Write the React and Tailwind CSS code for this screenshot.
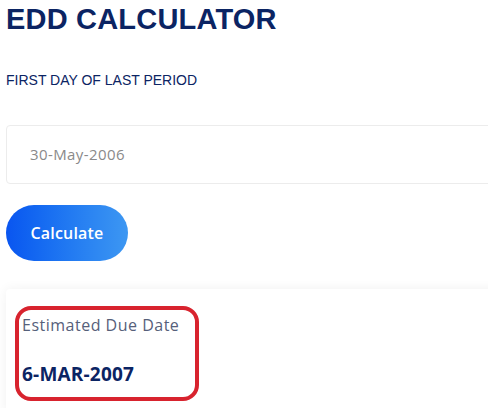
export default function App() {
  return (
    <div className="w-[488px] h-[408px] overflow-hidden bg-white pl-[6px] font-['Liberation_Sans',Arial,sans-serif]">
      <h1 className="pt-[3px] text-[29px] font-bold leading-[32px] text-[#0b2463] tracking-[0.2px]">
        EDD CALCULATOR
      </h1>
      <p className="mt-[37px] text-[14px] leading-[16px] text-[#0b2463]">
        FIRST DAY OF LAST PERIOD
      </p>

      <div className="mt-[37px] w-[500px] h-[59px] flex items-center pl-[23px] border border-[#ececec] rounded-[4px] bg-white">
        <span className="font-['Open_Sans',sans-serif] text-[15px] tracking-[0.4px] text-[#8a8a8a]">30-May-2006</span>
      </div>

      <button className="mt-[21px] w-[122px] h-[56px] rounded-full bg-gradient-to-r from-[#0a55f0] to-[#3d97f2] text-white font-['Open_Sans',sans-serif] font-semibold text-[16px] tracking-[0.2px]">
        Calculate
      </button>

      <div className="relative mt-[28px] w-[500px] h-[130px] bg-white rounded-[4px] shadow-[0_0_12px_rgba(0,0,0,0.06)] pt-[26px] pl-[16px]">
        <p className="font-['Open_Sans',sans-serif] text-[16px] leading-[20px] tracking-[0.5px] text-[#56607a]">Estimated Due Date</p>
        <p className="mt-[27px] font-['Open_Sans',sans-serif] font-bold text-[19px] leading-[24px] tracking-[0.2px] text-[#0b2463]">6-MAR-2007</p>
        <div className="absolute left-[9px] top-[17px] w-[184px] h-[95px] rounded-[16px] border-[4px] border-[#d8232e]" />
      </div>
    </div>
  );
}
